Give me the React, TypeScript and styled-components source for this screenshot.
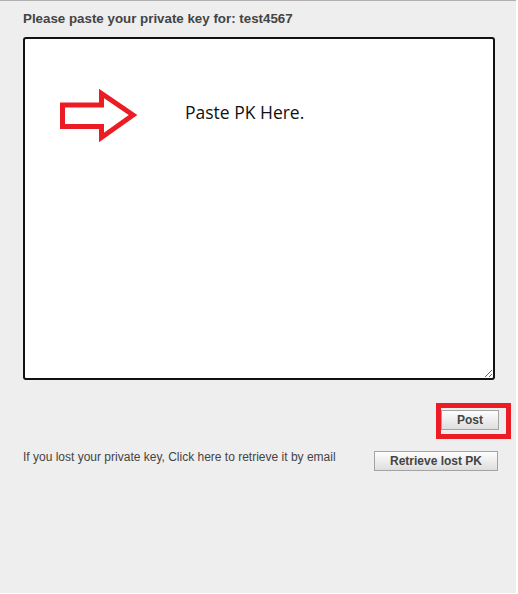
import React from "react";
import styled, { createGlobalStyle } from "styled-components";

const Global = createGlobalStyle`
  html, body { margin: 0; padding: 0; background: #ffffff; }
  * { box-sizing: border-box; }
`;

const Panel = styled.div`
  width: 516px;
  height: 593px;
  background: #eeeeee;
  border-top: 1px solid #b0b0b0;
  padding: 10px 5px 0 23px;
  display: flex;
  flex-direction: column;
  font-family: "Liberation Sans", Arial, sans-serif;
  color: #444444;
`;

const Title = styled.div`
  font-size: 13.33px;
  font-weight: bold;
  line-height: 16px;
`;

const EditorWrap = styled.div`
  position: relative;
  margin-top: 10px;
  width: 472px;
  height: 343px;
`;

const KeyArea = styled.textarea`
  display: block;
  width: 100%;
  height: 100%;
  border: 2px solid #111111;
  border-radius: 3px;
  background: #ffffff;
  padding: 4px;
  outline: none;
  font-family: "Liberation Mono", monospace;
  font-size: 13px;
`;

const Annotation = styled.div`
  position: absolute;
  left: 35px;
  top: 51px;
  display: flex;
  align-items: flex-start;
  pointer-events: none;
`;

const Hint = styled.span`
  margin-left: 43px;
  margin-top: 12px;
  font-family: "Open Sans", "Noto Sans", sans-serif;
  font-size: 17.5px;
  line-height: 24px;
  color: #111111;
`;

const PostRow = styled.div`
  display: flex;
  justify-content: flex-end;
  margin-top: 23px;
`;

const RedFrame = styled.div`
  border: 5px solid #ec1c24;
  padding: 2px 7px 4px 0;
  display: flex;
`;

const Button = styled.button<{ $w: number }>`
  width: ${(p) => p.$w}px;
  height: 20px;
  padding: 0;
  border: 1px solid #a3a3a3;
  border-radius: 0;
  background: linear-gradient(#fdfdfd, #dedede);
  font-family: "Liberation Sans", Arial, sans-serif;
  font-size: 12px;
  font-weight: bold;
  color: #444444;
  line-height: 18px;
`;

const LostRow = styled.div`
  display: flex;
  justify-content: space-between;
  align-items: flex-start;
  width: 475px;
  margin-top: 12px;
`;

const LostText = styled.span`
  font-size: 12px;
  line-height: 14px;
  margin-top: -1px;
`;

export default function App() {
  return (
    <>
      <Global />
      <Panel>
        <Title>Please paste your private key for: test4567</Title>
        <EditorWrap>
          <KeyArea spellCheck={false} />
          <Annotation>
            <svg width="84" height="56" viewBox="0 0 84 56">
              <polygon
                points="4.5,17 43.5,17 43.5,5.5 75,27 43.5,49.5 43.5,38.5 4.5,38.5"
                fill="none"
                stroke="#ec1c24"
                strokeWidth="5"
                strokeLinejoin="miter"
              />
            </svg>
            <Hint>Paste PK Here.</Hint>
          </Annotation>
        </EditorWrap>
        <PostRow>
          <RedFrame>
            <Button $w={58}>Post</Button>
          </RedFrame>
        </PostRow>
        <LostRow>
          <LostText>If you lost your private key, Click here to retrieve it by email</LostText>
          <Button $w={124}>Retrieve lost PK</Button>
        </LostRow>
      </Panel>
    </>
  );
}
